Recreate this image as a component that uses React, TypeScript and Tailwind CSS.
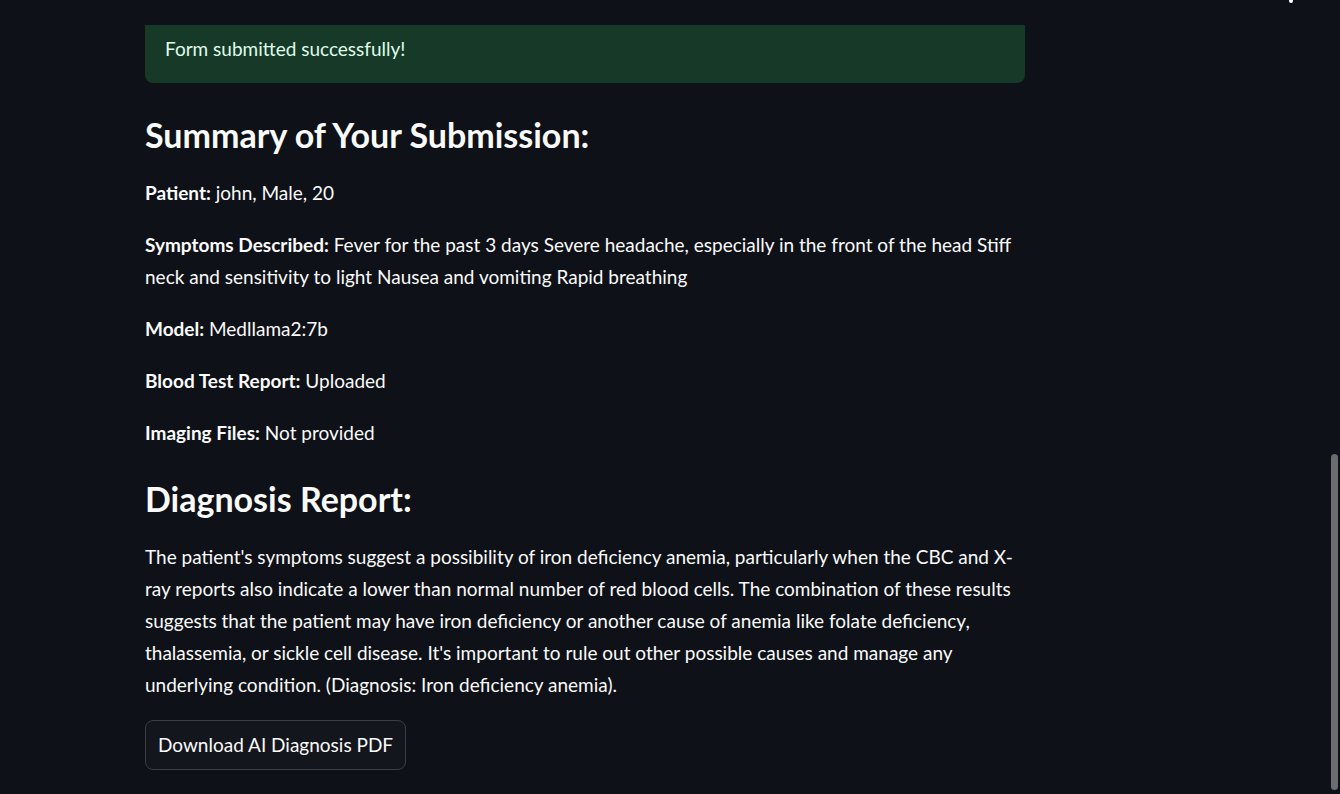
export default function App() {
	return (
		<div
			className="relative h-[794px] w-[1340px] overflow-hidden bg-[#0e1117]
				text-[19px] leading-[32px] text-[#fafafa]"
			style={{ fontFamily: 'Lato, "Noto Sans", sans-serif' }}
		>
			<div className="ml-[145px] flex w-[880px] flex-col pt-[25px]">
				<div
					className="h-[58px] rounded-b-lg bg-[#173928] px-5 pt-2
						text-[#dffde9]"
				>
					Form submitted successfully!
				</div>

				<h2 className="mt-[30px] mb-[20px] text-[34px] leading-[44px] font-bold">
					Summary of Your Submission:
				</h2>

				<div className="flex flex-col gap-5">
					<p>
						<b>Patient:</b> john, Male, 20
					</p>
					<p>
						<b>Symptoms Described:</b> Fever for the past 3 days Severe
						headache, especially in the front of the head Stiff neck and
						sensitivity to light Nausea and vomiting Rapid breathing
					</p>
					<p>
						<b>Model:</b> Medllama2:7b
					</p>
					<p>
						<b>Blood Test Report:</b> Uploaded
					</p>
					<p>
						<b>Imaging Files:</b> Not provided
					</p>
				</div>

				<h2 className="mt-[28px] mb-[20px] text-[34px] leading-[44px] font-bold">
					Diagnosis Report:
				</h2>

				<p>
					The patient's symptoms suggest a possibility of iron deficiency
					anemia, particularly when the CBC and X-ray reports also indicate a
					lower than normal number of red blood cells. The combination of these
					results suggests that the patient may have iron deficiency or another
					cause of anemia like folate deficiency, thalassemia, or sickle cell
					disease. It's important to rule out other possible causes and manage
					any underlying condition. (Diagnosis: Iron deficiency anemia).
				</p>

				<div className="mt-[19px]">
					<button
						className="h-[50px] rounded-lg border border-[#3b3e46]
							bg-[#13161d] px-3 text-[#fafafa]"
					>
						Download AI Diagnosis PDF
					</button>
				</div>
			</div>

			<div className="absolute top-0 left-[1289px] h-[3px] w-[4px] rounded-b-full bg-white" />
			<div
				className="absolute top-[454px] left-[1331px] h-[336px] w-[7px]
					rounded-full bg-[#6b6d71]"
			/>
		</div>
	);
}
